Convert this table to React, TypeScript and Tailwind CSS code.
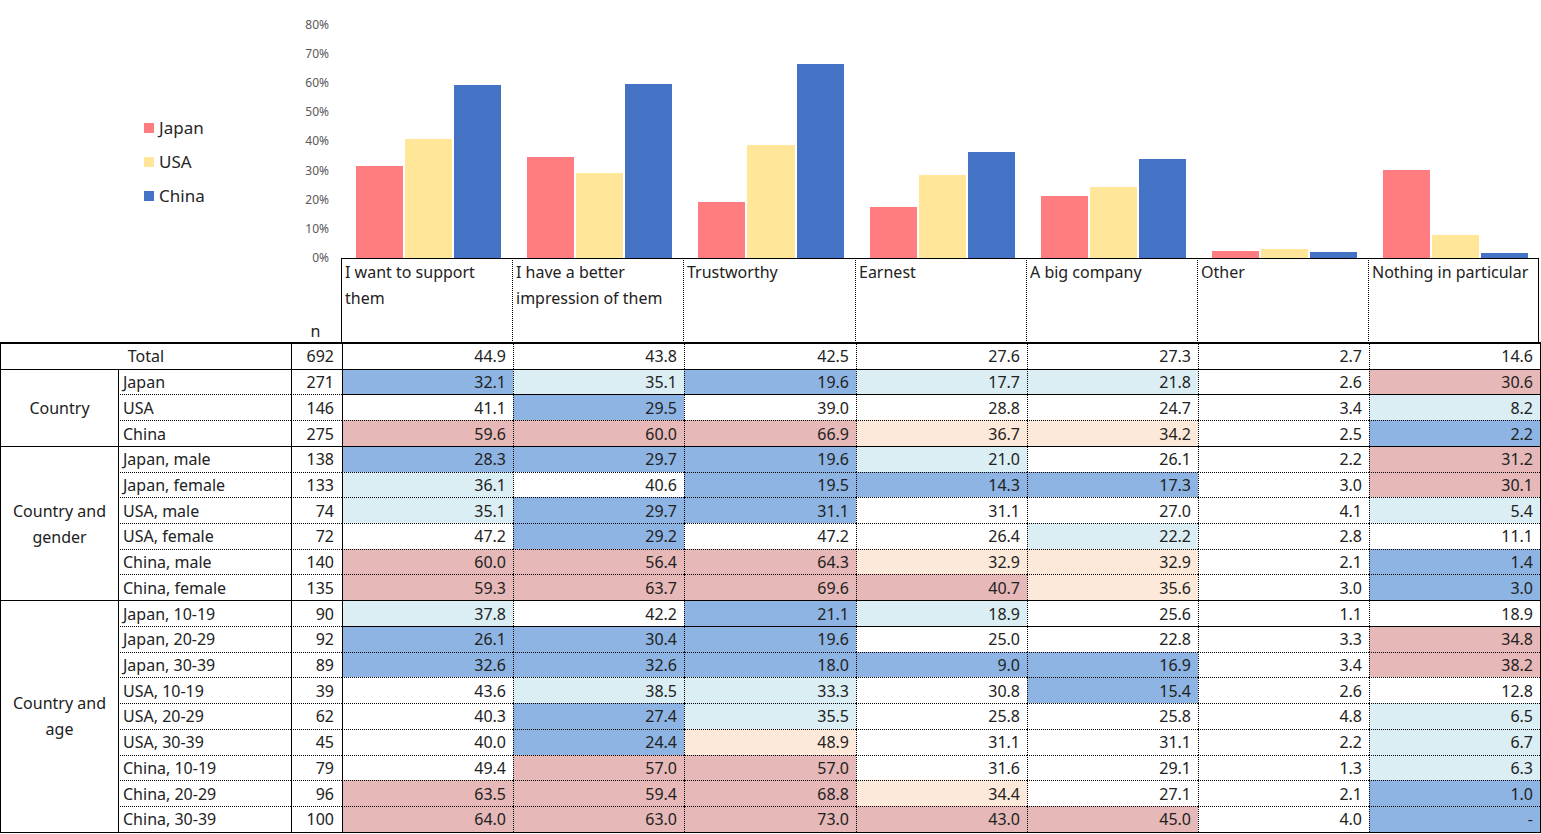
import { Fragment } from "react";

const B = "bg-[#8db4e2]";
const L = "bg-[#daeef3]";
const P = "bg-[#e6b8b7]";
const E = "bg-[#fde9d9]";
const W = "bg-white";

type Row = { label: string; n: number; v: string[]; c: string[]; solidData?: boolean };
type Group = { title: string | null; rows: Row[] };

const headers = [
  "I want to support them",
  "I have a better impression of them",
  "Trustworthy",
  "Earnest",
  "A big company",
  "Other",
  "Nothing in particular",
];

const groups: Group[] = [
  {
    title: null,
    rows: [
      { label: "Total", n: 692, v: ["44.9", "43.8", "42.5", "27.6", "27.3", "2.7", "14.6"], c: [W, W, W, W, W, W, W] },
    ],
  },
  {
    title: "Country",
    rows: [
      { label: "Japan", n: 271, v: ["32.1", "35.1", "19.6", "17.7", "21.8", "2.6", "30.6"], c: [B, L, B, L, L, W, P] },
      { label: "USA", n: 146, v: ["41.1", "29.5", "39.0", "28.8", "24.7", "3.4", "8.2"], c: [W, B, W, W, W, W, L], solidData: true },
      { label: "China", n: 275, v: ["59.6", "60.0", "66.9", "36.7", "34.2", "2.5", "2.2"], c: [P, P, P, E, E, W, B] },
    ],
  },
  {
    title: "Country and gender",
    rows: [
      { label: "Japan, male", n: 138, v: ["28.3", "29.7", "19.6", "21.0", "26.1", "2.2", "31.2"], c: [B, B, B, L, W, W, P] },
      { label: "Japan, female", n: 133, v: ["36.1", "40.6", "19.5", "14.3", "17.3", "3.0", "30.1"], c: [L, W, B, B, B, W, P] },
      { label: "USA, male", n: 74, v: ["35.1", "29.7", "31.1", "31.1", "27.0", "4.1", "5.4"], c: [L, B, B, W, W, W, L] },
      { label: "USA, female", n: 72, v: ["47.2", "29.2", "47.2", "26.4", "22.2", "2.8", "11.1"], c: [W, B, W, W, L, W, W] },
      { label: "China, male", n: 140, v: ["60.0", "56.4", "64.3", "32.9", "32.9", "2.1", "1.4"], c: [P, P, P, E, E, W, B] },
      { label: "China, female", n: 135, v: ["59.3", "63.7", "69.6", "40.7", "35.6", "3.0", "3.0"], c: [P, P, P, P, E, W, B] },
    ],
  },
  {
    title: "Country and age",
    rows: [
      { label: "Japan, 10-19", n: 90, v: ["37.8", "42.2", "21.1", "18.9", "25.6", "1.1", "18.9"], c: [L, W, B, L, W, W, W] },
      { label: "Japan, 20-29", n: 92, v: ["26.1", "30.4", "19.6", "25.0", "22.8", "3.3", "34.8"], c: [B, B, B, W, W, W, P], solidData: true },
      { label: "Japan, 30-39", n: 89, v: ["32.6", "32.6", "18.0", "9.0", "16.9", "3.4", "38.2"], c: [B, B, B, B, B, W, P] },
      { label: "USA, 10-19", n: 39, v: ["43.6", "38.5", "33.3", "30.8", "15.4", "2.6", "12.8"], c: [W, L, L, W, B, W, W] },
      { label: "USA, 20-29", n: 62, v: ["40.3", "27.4", "35.5", "25.8", "25.8", "4.8", "6.5"], c: [W, B, L, W, W, W, L] },
      { label: "USA, 30-39", n: 45, v: ["40.0", "24.4", "48.9", "31.1", "31.1", "2.2", "6.7"], c: [W, B, E, W, W, W, L] },
      { label: "China, 10-19", n: 79, v: ["49.4", "57.0", "57.0", "31.6", "29.1", "1.3", "6.3"], c: [W, P, P, W, W, W, L] },
      { label: "China, 20-29", n: 96, v: ["63.5", "59.4", "68.8", "34.4", "27.1", "2.1", "1.0"], c: [P, P, P, E, W, W, B] },
      { label: "China, 30-39", n: 100, v: ["64.0", "63.0", "73.0", "43.0", "45.0", "4.0", "-"], c: [P, P, P, P, P, W, B] },
    ],
  },
];

const series = [
  { name: "Japan", color: "bg-[#ff7c80]", row: groups[1].rows[0] },
  { name: "USA", color: "bg-[#ffe699]", row: groups[1].rows[1] },
  { name: "China", color: "bg-[#4472c4]", row: groups[1].rows[2] },
];

const cols = "grid grid-cols-[117px_173px_51px_171px_171px_172px_171px_171px_171px_171px]";
const PX_PER_PCT = 2.9125;

const topSolid = "border-t border-t-black";
const topDotted = "border-t border-t-black [border-top-style:dotted]";
const leftSolid = "border-l border-l-black";
const leftDotted = "border-l border-l-black [border-left-style:dotted]";

function Chart() {
  const ticks = ["80%", "70%", "60%", "50%", "40%", "30%", "20%", "10%", "0%"];
  return (
    <div className="flex h-[258px]">
      <div className="flex w-[341px]">
        {/* Legend */}
        <div className="flex-1 pl-[144px] pt-[111px]">
          {series.map((s) => (
            <div key={s.name} className="flex h-[34px] items-center gap-[5px]">
              <span className={`h-[10px] w-[10px] ${s.color}`} />
              <span className="text-[17px] text-[#262626]">{s.name}</span>
            </div>
          ))}
        </div>
        {/* Y axis */}
        <div className="mr-[12px] flex w-[40px] flex-col pt-[10.4px]">
          {ticks.map((t) => (
            <div key={t} className="flex h-[29.125px] shrink-0 items-center justify-end text-[12px] leading-none text-[#595959]">
              {t}
            </div>
          ))}
        </div>
      </div>
      {/* Plot */}
      <div className="grid flex-1 grid-cols-[171px_171px_172px_171px_171px_171px_171px]">
        {headers.map((h, i) => (
          <div key={h} className="flex items-end pl-[14px] pr-[10px]">
            {series.map((s) => (
              <div
                key={s.name}
                className={`flex-1 ${s.color} border-x-[0.5px] border-t-[0.5px] border-white`}
                style={{ height: `${parseFloat(s.row.v[i]) * PX_PER_PCT}px` }}
              />
            ))}
          </div>
        ))}
      </div>
    </div>
  );
}

function HeaderRow() {
  return (
    <div className={`${cols} h-[85px]`}>
      <div className="col-span-2" />
      <div className="flex items-end justify-center pb-[4px] text-[16px] leading-none text-[#222]">n</div>
      {headers.map((h, i) => (
        <div
          key={h}
          className={`${topSolid} ${i === 0 ? leftSolid : leftDotted} ${i === 6 ? "border-r border-r-black" : ""} pl-[3px] pr-[2px] text-[16px] leading-[26px] text-[#222]`}
        >
          {h}
        </div>
      ))}
    </div>
  );
}

function Table() {
  return (
    <div className={`${cols} -mt-px auto-rows-[25.72px] border border-black text-[16px] text-[#222]`}>
      {groups.map((g, gi) => (
        <GroupRows key={gi} group={g} />
      ))}
    </div>
  );
}

function GroupRows({ group }: { group: Group }) {
  const span = ["", "row-span-1", "row-span-2", "row-span-3", "row-span-4", "row-span-5", "row-span-6", "row-span-7", "row-span-8", "row-span-9"][group.rows.length];
  return (
    <>
      {group.title && (
        <div className={`${span} ${topSolid} flex items-center justify-center px-[6px] text-center leading-[26px]`}>
          {group.title}
        </div>
      )}
      {group.rows.map((r, ri) => {
        const top = ri === 0 ? topSolid : topDotted;
        const dataTop = ri === 0 || r.solidData ? topSolid : topDotted;
        return (
          <Fragment key={r.label}>
            {group.title ? (
              <div className={`${top} ${leftSolid} flex items-center pl-[4px]`}>{r.label}</div>
            ) : (
              <div className={`col-span-2 ${top} flex items-center justify-center`}>{r.label}</div>
            )}
            <div className={`${top} ${leftSolid} flex items-center justify-end pr-[8px]`}>{r.n}</div>
            {r.v.map((v, ci) => (
              <div
                key={ci}
                className={`${dataTop} ${ci === 0 ? leftSolid : leftDotted} ${r.c[ci]} flex items-center justify-end pr-[7px]`}
              >
                {v}
              </div>
            ))}
          </Fragment>
        );
      })}
    </>
  );
}

export default function App() {
  return (
    <div className="h-[834px] w-[1541px] overflow-hidden bg-white font-['Noto_Sans',sans-serif]">
      <Chart />
      <HeaderRow />
      <Table />
    </div>
  );
}
